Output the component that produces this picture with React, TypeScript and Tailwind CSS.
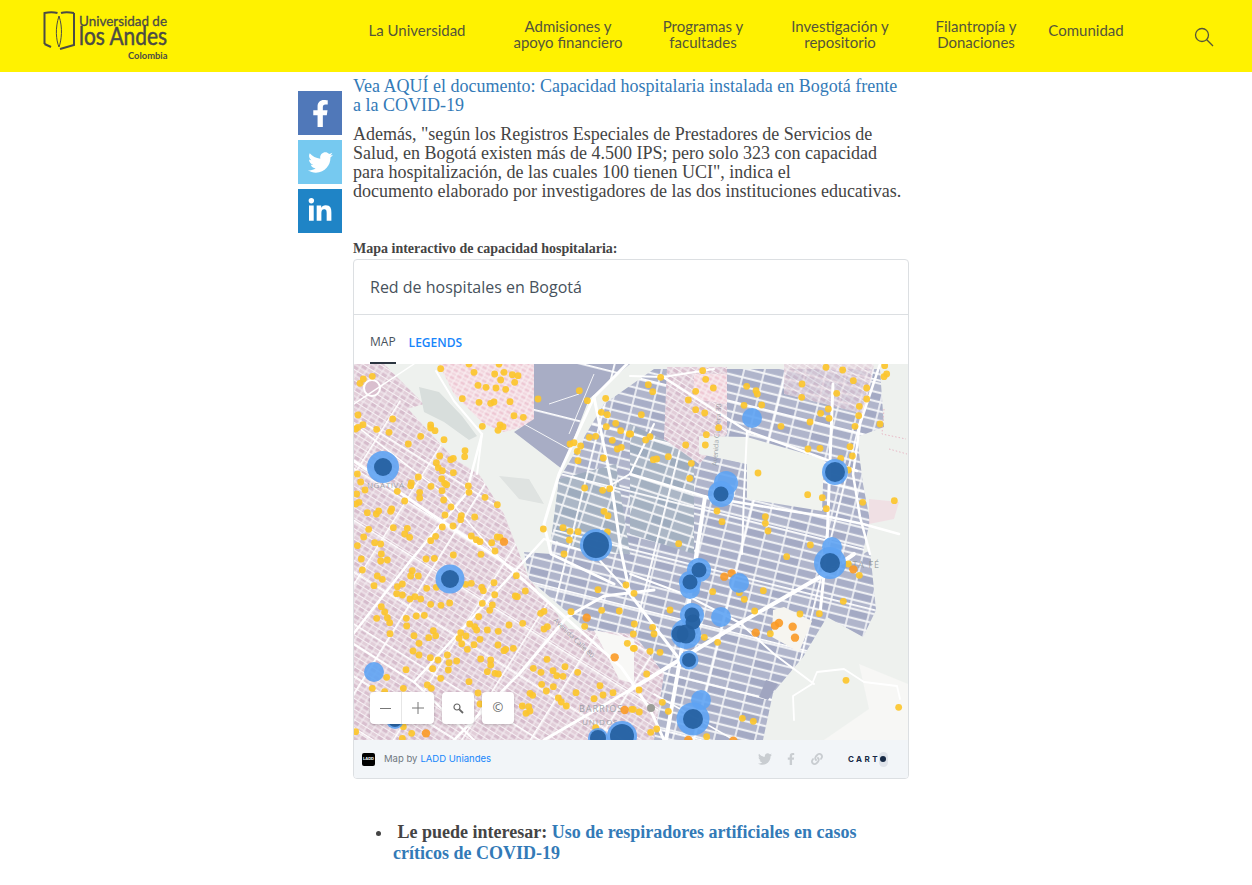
import React from "react";
import { FaFacebookF, FaTwitter, FaLinkedinIn, FaLink } from "react-icons/fa";

const NAV = [
  { w: "w-[150px]", lines: ["La Universidad"], cls: "-mt-[12px]" },
  { w: "w-[152px]", lines: ["Admisiones y", "apoyo financiero"], cls: "-mt-[4px]" },
  { w: "w-[118px]", lines: ["Programas y", "facultades"], cls: "-mt-[4px]" },
  { w: "w-[156px]", lines: ["Investigación y", "repositorio"], cls: "-mt-[4px]" },
  { w: "w-[116px]", lines: ["Filantropía y", "Donaciones"], cls: "-mt-[4px]" },
  { w: "w-[104px]", lines: ["Comunidad"], cls: "-mt-[12px]" },
];

// dot positions were read off 3x crops, so each list has its crop offset
type Crop = { ox: number; oy: number; yellow: string; orange: string };
const CROPS: Crop[] = [
  {
    ox: 0,
    oy: 0,
    yellow:
      "260,14 360,25 345,0 435,0 450,25 422,30 475,32 492,35 440,48 482,55 372,64 396,70 426,72 455,76 18,58 28,45 55,37 325,104 375,115 410,118 420,114 468,113 552,105 676,80 700,110 755,103 742,145 760,152 480,155 508,160 12,153 116,165 385,187 230,183 230,192 243,200 438,183 447,188 432,199 27,182 12,190 5,195 68,196 105,205 200,217 270,227 163,240 757,188 785,178 800,200 826,210 706,220 725,217 775,229 648,240 660,236 680,246 670,262 790,255 802,250 748,282 672,290 333,260 332,278 257,276 290,287 298,283 247,296 253,311 265,320 298,326 193,339 172,357 170,365 231,367 263,345 272,358 278,362 343,366 345,385 264,380 197,385 197,402 393,400 692,372 746,379 767,374 750,442 762,455 130,382 33,378 20,354 10,330 8,390 15,415 5,420 152,411 269,408 291,429 430,422 40,446 67,450 74,441 113,435 110,442 273,453 322,455 320,467 362,459 265,489 297,486 118,491 44,496 160,493 152,510 167,520 29,519 245,517 230,530 352,516 367,527 378,533 430,519 438,520 413,536 62,536 80,540 10,545 627,491 648,502 672,503 646,528 760,504 568,495",
    orange: "450,533",
  },
  {
    ox: 276,
    oy: 0,
    yellow:
      "218,20 92,40 227,46 55,62 68,83 250,72 197,82 175,108 350,67 378,80 382,90 342,124 395,123 516,60 515,100 588,10 638,18 670,50 710,72 710,105 620,88 688,127 595,135 572,148 597,163 686,155 540,174 675,187 750,180 764,5 770,30 762,38 34,152 197,137 224,147 266,191 453,187 229,212 2,210 60,218 47,228 167,243 226,243 534,255 570,253 660,248 667,276 632,283 115,278 70,287 80,285 184,298 655,318 384,327 179,343 533,392 577,401 589,434 698,415 793,410 261,441 276,473 406,458 406,478 414,501 146,539 541,543",
    orange: "",
  },
  {
    ox: 0,
    oy: 186,
    yellow:
      "82,12 22,27 80,33 100,30 25,60 216,27 241,25 298,15 381,13 423,3 630,12 175,62 170,78 193,78 70,78 85,88 60,107 145,102 130,110 218,115 247,112 335,103 352,100 420,98 487,77 383,112 388,122 422,134 514,123 484,138 490,140 128,131 145,135 168,147 183,140 200,147 230,163 261,166 287,159 385,160 415,165 407,181 82,170 92,186 68,205 100,203 107,218 157,205 158,228 187,198 211,196 374,200 560,190 570,184 651,185 743,181 796,183 732,119 816,105 506,220 465,225 347,222 362,230 368,240 400,240 433,244 570,237 580,230 692,229 108,251 180,257 238,242 245,257 224,263 320,248 336,258 315,265 378,268 195,280 323,281 360,284 432,285 340,298 177,303 195,315 450,302 455,298 478,295 280,315 229,323 252,330 308,333 285,338 380,327 410,330 410,345 236,356 283,360 400,365 423,370 433,372 156,359 260,385 98,382 345,395 220,405 232,415 55,415 148,415 92,425 372,429 378,462 538,355 561,367 597,362 608,377 627,379 633,350 671,367 579,328 563,403 598,410 577,423 528,430 536,436 613,444 622,456 637,468 666,428 738,407 747,435 777,428 720,446 505,468 524,470 516,490 528,483 725,533 173,550 148,530 145,565 5,545 833,478 820,280 838,295",
    orange: "698,203 782,322 216,550 812,480",
  },
  {
    ox: 276,
    oy: 186,
    yellow:
      "470,20 12,130 248,125 400,122 343,148 328,128 120,180 374,183 510,192 568,191 640,154 688,76 655,42 13,222 68,232 72,252 10,252 223,262 263,277 421,251 13,295 60,304 90,307 50,372 27,420 97,457 115,484 10,478 28,486 337,505 370,514 230,560 80,537 62,547 648,391 806,472",
    orange: "283,80 305,70 670,58 435,227 447,219 488,230 495,263 377,248 175,570 310,572",
  },
];

function parseDots(crop: Crop, list: string) {
  if (!list) return [];
  return list.split(" ").map((pair) => {
    const [x, y] = pair.split(",").map(Number);
    return { x: crop.ox + x / 3, y: crop.oy + y / 3 };
  });
}

// [cx, cy, outer radius, inner radius], map coordinates
const HOSPITALS: number[][] = [
  [29, 103, 16, 9],
  [242, 181, 16, 13],
  [96, 215, 14.5, 9],
  [20, 308, 10, 0],
  [41, 356, 9, 7],
  [268, 372, 15, 12],
  [244, 374, 10, 8],
  [398, 54, 10, 0],
  [372, 119, 12, 0],
  [367, 130, 13, 7.5],
  [481, 108, 13, 10],
  [478, 183, 10, 0],
  [476, 199, 16, 10],
  [345, 206, 12, 7.5],
  [336, 218, 11, 7.5],
  [336, 225, 10, 0],
  [385, 219, 10, 0],
  [338, 251, 12, 7.5],
  [339, 258, 0, 7.5],
  [367, 253, 10, 0],
  [332, 270, 15, 9.5],
  [326, 270, 0, 8.5],
  [335, 296, 9.5, 7],
  [347, 336, 10, 0],
  [339, 355, 16.5, 10],
];

const ROADS: [string, number][] = [
  ["M0 97 L80 152 L147 196 L267 303 L296 345 L310 376", 3],
  ["M0 269 L57 196 L112 130 L128 70", 2.5],
  ["M60 318 L140 230 L190 175", 2.5],
  ["M166 309 L213 253 L250 232 L300 226", 3],
  ["M100 376 L166 309", 2.5],
  ["M276 326 L386 259 L473 209 L500 190", 4],
  ["M190 376 L276 326", 3],
  ["M351 133 L343 186 L326 296 L312 376", 4],
  ["M276 110 L353 133 L436 147 L476 153 L509 160 L545 170", 2.5],
  ["M309 13 L393 67 L476 97 L503 107", 2.5],
  ["M273 0 L240 33 L205 110 L190 160 L197 190 L260 220", 3],
  ["M240 33 L257 117 L267 187 L276 230 L326 296", 3],
  ["M479 20 L476 97 L473 180 L466 250", 3],
  ["M526 0 L506 60 L499 110 L506 153 L516 190", 2.5],
  ["M82 7 L100 37 L128 70 L123 110", 2],
  ["M393 67 L390 130 L388 190", 2],
  ["M0 40 L60 0", 1.5],
  ["M120 376 L60 318 L0 280", 2],
  ["M147 196 L90 130 L0 60", 1.5],
  ["M276 230 L240 190 L190 175", 2],
  ["M300 60 L276 110 L250 125", 2],
  ["M386 259 L330 230 L276 210", 2],
  ["M386 259 L420 290 L460 320", 2],
  ["M440 356 L439 332 L458 320 L463 308 L490 305 L510 318 L543 322 L546 335", 1.8],
  ["M300 330 L380 376", 1.5],
  ["M276 12 L309 13 L360 5", 2],
];

const SLATE_AREA =
  "M205 115L250 40L300 5H526L530 63L503 73L509 120L516 157L509 190L516 186L522 246L509 273L473 253L449 293L419 329L409 376H290L250 280L175 215L170 188L197 190Z";
const MAUVE_AREA = "M0 60L45 35L100 95L125 110L150 150L175 215L215 265L280 270L310 310L300 376H0Z";

function MapDrawing() {
  return (
    <svg viewBox="0 0 554 376" className="block w-full h-full" fontFamily="'Open Sans', sans-serif">
      <defs>
        <pattern id="mauve" width="14" height="9" patternUnits="userSpaceOnUse" patternTransform="rotate(32)">
          <rect width="14" height="9" fill="#f7f2f5" />
          <rect x="0.5" y="0.5" width="6" height="3.500" fill="#d9c0cf" />
          <rect x="7.500" y="0.5" width="6" height="3.500" fill="#e2ced9" />
          <rect x="0.5" y="5" width="6" height="3.500" fill="#e2ced9" />
          <rect x="7.500" y="5" width="6" height="3.500" fill="#d6bccc" />
        </pattern>
        <pattern id="pink" width="12" height="8" patternUnits="userSpaceOnUse" patternTransform="rotate(28)">
          <rect width="12" height="8" fill="#faf3f5" />
          <rect x="0.5" y="0.5" width="5" height="3" fill="#eec8d4" />
          <rect x="6.500" y="0.5" width="5" height="3" fill="#f2d7df" />
          <rect x="0.5" y="4.500" width="5" height="3" fill="#f2d7df" />
          <rect x="6.500" y="4.500" width="5" height="3" fill="#eec8d4" />
        </pattern>
        <pattern id="slate" width="40" height="18" patternUnits="userSpaceOnUse" patternTransform="rotate(14)">
          <rect width="40" height="18" fill="#f5f6f8" />
          <rect x="0.8" y="0.8" width="18.400" height="7" fill="#a8aec7" />
          <rect x="20.800" y="0.8" width="18.400" height="7" fill="#b0b5cb" />
          <rect x="0.8" y="9.800" width="18.400" height="7" fill="#b0b5cb" />
          <rect x="20.800" y="9.800" width="18.400" height="7" fill="#a4aac4" />
        </pattern>
        <pattern id="steel" width="44" height="20" patternUnits="userSpaceOnUse" patternTransform="rotate(18)">
          <rect width="44" height="20" fill="#f5f6f8" />
          <rect x="0.8" y="0.8" width="20.400" height="8" fill="#a4b1c1" />
          <rect x="22.800" y="0.8" width="20.400" height="8" fill="#acb7c6" />
          <rect x="0.8" y="10.800" width="20.400" height="8" fill="#acb7c6" />
          <rect x="22.800" y="10.800" width="20.400" height="8" fill="#9eacbe" />
        </pattern>
        <pattern id="streetsA" width="84" height="56" patternUnits="userSpaceOnUse" patternTransform="rotate(14)">
          <path d="M0 .9H84M.9 0V56" stroke="#fff" strokeWidth="1.800" fill="none" />
        </pattern>
        <pattern id="streetsB" width="58" height="44" patternUnits="userSpaceOnUse" patternTransform="rotate(32)">
          <path d="M0 .8H58M.8 0V44" stroke="#fff" strokeWidth="1.600" fill="none" />
        </pattern>
        <filter id="soft">
          <feGaussianBlur stdDeviation="0.4" />
        </filter>
      </defs>

      <rect width="554" height="376" fill="#eef1ee" />
      <g filter="url(#soft)">
        <path d={SLATE_AREA} fill="url(#slate)" />
        <path d="M205 115L262 100L276 190L240 190L197 175Z" fill="url(#steel)" />
        <path d="M276 60L340 90V190L276 170Z" fill="url(#steel)" />
        <path d={SLATE_AREA} fill="url(#streetsA)" />
        <path d="M0 0H30L70 40L0 60Z" fill="url(#mauve)" />
        <path d={MAUVE_AREA} fill="url(#mauve)" />
        <path d={MAUVE_AREA} fill="url(#streetsB)" />
        <path d="M85 0H180V60L150 68L130 60L100 30Z" fill="url(#pink)" />
        <path d="M180 0H276L235 35L208 105L160 68L180 55Z" fill="#a8adc5" />
        <path d="M180 0H276L235 35L208 105L160 68L180 55Z" fill="url(#streetsA)" />
        <path d="M195 40L225 30M170 60L215 85M240 10L215 70" stroke="#f3f4f7" strokeWidth="1" fill="none" />
        <path d="M313 3H373V70L345 100L310 75Z" fill="url(#mauve)" />
        <path d="M340 10H373V40L340 35Z" fill="url(#pink)" />
        <path d="M430 0H520L510 50L430 30Z" fill="url(#mauve)" opacity=".7" />
        <path d="M65 23L85 28L108 52L123 72L115 76L90 58L70 48Z" fill="#d8dedc" />
        <path d="M145 112L175 115L190 140L165 135Z" fill="#dfe3e1" />
        <path d="M393 73L470 95L468 147L393 135Z" fill="#f0f3ef" />
        <path d="M345 72L393 73V100L345 90Z" fill="#eef1ee" />
        <path d="M240 266L280 275V320L265 315Z" fill="#f8f8f6" />
        <path d="M419 246L430 243L458 257L445 288L418 273Z" fill="#f6f5f0" />
        <path d="M515 135L545 138L540 155L515 160Z" fill="#f1d9df" opacity=".7" />
        <path d="M505 300L554 320V376H470L515 345Z" fill="#f7f7f5" />
        <path d="M412 316L424 320L414 336L405 333Z" fill="#a0a5c0" />
        <circle cx="18" cy="24" r="8" fill="#d9bfce" stroke="#fff" strokeWidth="2" />
      </g>
      <path d="M530 45L528 70L552 75M535 85L553 90" fill="none" stroke="#e8b9c6" strokeWidth="1" strokeDasharray="1.500 2" />

      {ROADS.map(([d, w], i) => (
        <path key={i} d={d} fill="none" stroke="#ffffff" strokeWidth={w} strokeLinejoin="round" strokeLinecap="round" />
      ))}

      <g fill="#8f979c" fillOpacity=".85" fontSize="8">
        <text x="13" y="124" letterSpacing=".6">NGATIVÁ</text>
        <text x="225" y="348" letterSpacing="1" fontSize="9">BARRIOS</text>
        <text x="228" y="361" letterSpacing="1" fontSize="8">UNIDOS</text>
        <text x="478" y="204" letterSpacing="1" fontSize="9">SANTA FÉ</text>
        <text transform="translate(199 257) rotate(44)" fontSize="7">Avenida Calle 80</text>
        <text transform="translate(363 102) rotate(-86)" fontSize="7">Avenida Carrera 30</text>
      </g>

      {CROPS.map((c) =>
        parseDots(c, c.yellow).map((d, i) => (
          <circle key={`y${c.ox}${c.oy}${i}`} cx={d.x} cy={d.y} r="3.4" fill="#fcc62d" fillOpacity=".92" />
        ))
      )}
      {CROPS.map((c) =>
        parseDots(c, c.orange).map((d, i) => (
          <circle key={`o${c.ox}${c.oy}${i}`} cx={d.x} cy={d.y} r="4.2" fill="#fb9a26" fillOpacity=".9" />
        ))
      )}
      <circle cx="297" cy="344" r="4" fill="#9b9d97" />
      {HOSPITALS.map(([x, y, outer], i) =>
        outer > 0 ? <circle key={`h${i}`} cx={x} cy={y} r={outer} fill="#5ea3f3" fillOpacity=".9" /> : null
      )}
      {HOSPITALS.map(([x, y, , inner], i) =>
        inner > 0 ? <circle key={`i${i}`} cx={x} cy={y} r={inner} fill="#25609f" fillOpacity=".92" /> : null
      )}
    </svg>
  );
}

function Logo() {
  return (
    <svg width="130" height="56" viewBox="0 0 130 56" className="block overflow-visible" fontFamily="Lato, sans-serif" fill="#4b4b45">
      <g fill="none" stroke="#4b4b45" strokeWidth="2">
        <path d="M1.500 36 V5 C6 4 11 4 14.500 5" />
        <path d="M31 5 C26 4 21 4 18 5" />
        <path d="M31 5 V37 L17 41" />
        <path d="M1.500 36 L8 39" />
        <path d="M16 8 C12 20 13 32 16 39 C18.500 32 20 20 16 8" strokeWidth="1" />
      </g>
      <text x="36" y="18" fontSize="14" fontWeight="400" stroke="#4b4b45" strokeWidth=".3" textLength="88" lengthAdjust="spacingAndGlyphs">
        Universidad de
      </text>
      <text x="36" y="37" fontSize="25" fontWeight="400" stroke="#4b4b45" strokeWidth=".5" textLength="88" lengthAdjust="spacingAndGlyphs">
        los Andes
      </text>
      <text x="85" y="51" fontSize="10" fontWeight="700" textLength="39.500" lengthAdjust="spacingAndGlyphs">
        Colombia
      </text>
    </svg>
  );
}

export default function App() {
  return (
    <div className="h-[885px] overflow-hidden bg-white font-['Liberation_Serif',serif] text-[#444]">
      <header className="h-[72px] bg-[#fff200] flex items-center pl-[43px]">
        <div className="w-[299px] shrink-0">
          <Logo />
        </div>
        <nav className="flex items-center font-['Lato',sans-serif] text-[15px] leading-[16px] text-[#55553a]">
          {NAV.map((item) => (
            <a key={item.lines[0]} className={`${item.w} shrink-0 text-center ${item.cls}`}>
              {item.lines.map((l) => (
                <div key={l}>{l}</div>
              ))}
            </a>
          ))}
        </nav>
        <svg width="20" height="20" viewBox="0 0 20 20" fill="none" stroke="#55553a" strokeWidth="1.300" className="ml-[56px] mt-[2px]">
          <circle cx="8" cy="8" r="6.500" />
          <path d="M12.800 12.800 L19 19" />
        </svg>
      </header>

      <main className="flex pl-[298px]">
        <div className="w-[44px] mr-[11px] pt-[19px] flex flex-col gap-[5px] shrink-0 text-white">
          <a className="h-[44px] bg-[#5078b9] flex items-center justify-center text-[27px]">
            <FaFacebookF />
          </a>
          <a className="h-[44px] bg-[#76c9f0] flex items-center justify-center text-[25px]">
            <FaTwitter />
          </a>
          <a className="h-[44px] bg-[#1f84c6] flex items-center justify-center text-[26px]">
            <FaLinkedinIn />
          </a>
        </div>

        <div className="w-[556px] shrink-0">
          <p className="pt-[5px] text-[18px] leading-[19px] text-[#337ab7]">
            Vea AQUÍ el documento: Capacidad hospitalaria instalada en Bogotá frente
            <br />a la COVID-19
          </p>
          <p className="mt-[10px] text-[18px] leading-[19px] w-[570px]">
            Además, "según los Registros Especiales de Prestadores de Servicios de
            <br />
            Salud, en Bogotá existen más de 4.500 IPS; pero solo 323 con capacidad
            <br />
            para hospitalización, de las cuales 100 tienen UCI", indica el
            <br />
            documento elaborado por investigadores de las dos instituciones educativas.
          </p>
          <p className="mt-[40px] text-[14px] leading-[16px] font-bold">Mapa interactivo de capacidad hospitalaria:</p>

          <div className="mt-[2px] h-[520px] border border-[#dcdfe2] rounded-[4px] overflow-hidden font-['Open_Sans',sans-serif] flex flex-col">
            <div className="h-[55px] shrink-0 border-b border-[#dcdfe2] flex items-center pl-[16px] text-[16px] text-[#47525c]">
              Red de hospitales en Bogotá
            </div>
            <div className="h-[49px] shrink-0 flex pl-[16px] gap-[13px] text-[12px] font-semibold">
              <span className="h-full flex items-center border-b-2 border-[#2c3540] text-[#47525c] font-normal pt-[6px]">MAP</span>
              <span className="h-full flex items-center text-[#1785fb] pt-[6px]">LEGENDS</span>
            </div>
            <div className="relative h-[376px] shrink-0">
              <MapDrawing />
              <div className="absolute left-[16px] top-[328px] flex gap-[8px] text-[#777]">
                <div className="w-[64px] h-[32px] bg-white rounded-[4px] shadow-[0_1px_3px_rgba(0,0,0,0.2)] flex">
                  <div className="w-[32px] border-r border-[#e6e6e6] flex items-center justify-center">
                    <span className="block w-[11px] h-px bg-[#777]" />
                  </div>
                  <div className="w-[32px] flex items-center justify-center">
                    <svg width="12" height="12" viewBox="0 0 12 12" stroke="#777">
                      <path d="M0 6H12M6 0V12" />
                    </svg>
                  </div>
                </div>
                <div className="w-[32px] h-[32px] bg-white rounded-[4px] shadow-[0_1px_3px_rgba(0,0,0,0.2)] flex items-center justify-center">
                  <svg width="11" height="11" viewBox="0 0 11 11" fill="none" stroke="#666" strokeWidth="1.200">
                    <circle cx="4" cy="4" r="3" />
                    <path d="M6.300 6.300 L10 10" strokeWidth="1.800" />
                  </svg>
                </div>
                <div className="w-[32px] h-[32px] bg-white rounded-[4px] shadow-[0_1px_3px_rgba(0,0,0,0.2)] flex items-center justify-center text-[13px] text-[#666]">
                  ©
                </div>
              </div>
            </div>
            <div className="flex-1 bg-[#f2f5f8] flex items-center pl-[8px] pr-[20px] text-[9.5px] font-['Inter',sans-serif]">
              <span className="w-[13px] h-[13px] bg-black rounded-[2px] text-white text-[4px] font-bold flex items-center justify-center">LADD</span>
              <span className="ml-[9px] text-[#6f7780]">Map by</span>
              <span className="ml-[3px] text-[#1785fb]">LADD Uniandes</span>
              <span className="ml-auto flex items-center text-[#c9cdd1]">
                <FaTwitter className="text-[14px]" />
                <FaFacebookF className="text-[12px] ml-[13px]" />
                <FaLink className="text-[12px] ml-[14px]" />
              </span>
              <span className="ml-[25px] relative flex items-center text-[8px] font-bold tracking-[2.4px] text-[#162945] w-[40px]">
                CART
                <span className="ml-[-1px] w-[15px] h-[15px] rounded-full bg-[#dfe3ea] flex items-center justify-center">
                  <span className="block w-[6px] h-[6px] rounded-full bg-[#162945]" />
                </span>
              </span>
            </div>
          </div>

          <ul className="mt-[43px] pl-[40px] list-disc text-[18px] leading-[21px] font-bold marker:text-[#444] w-[530px]">
            <li>
              &nbsp;Le puede interesar: <span className="text-[#337ab7]">Uso de respiradores artificiales en casos críticos de COVID-19</span>
            </li>
          </ul>
        </div>
      </main>
    </div>
  );
}
